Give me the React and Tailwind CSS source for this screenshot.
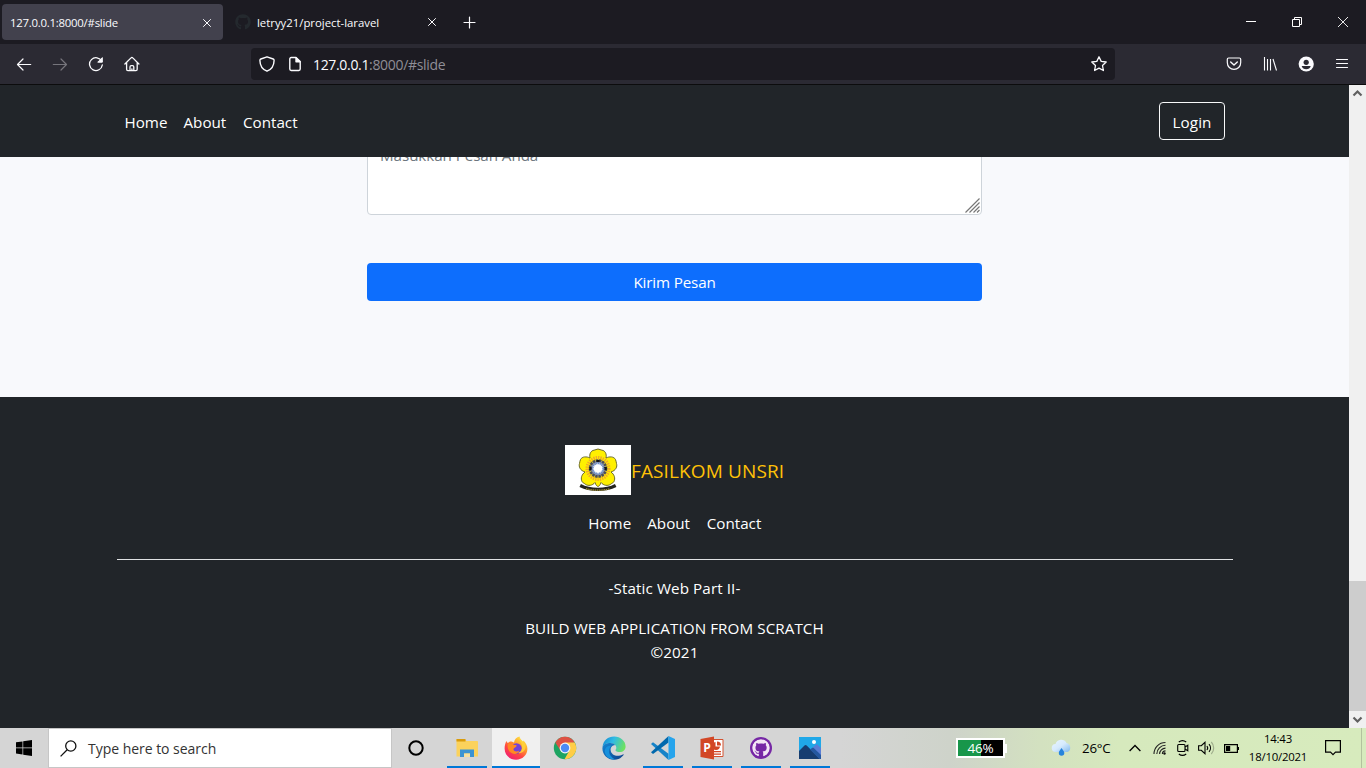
import React from 'react';
import { FaGithub } from 'react-icons/fa';

const line = { fill: 'none', stroke: 'currentColor', strokeLinecap: 'round', strokeLinejoin: 'round' };

function CloseIcon({ className }) {
  return (
    <svg className={className} width="10" height="10" viewBox="0 0 10 10" {...line} strokeWidth="1">
      <path d="M1.5 1.5l7 7M8.5 1.5l-7 7" />
    </svg>
  );
}

function TabBar() {
  return (
    <div className="flex h-11 items-center bg-[#1c1b22] text-[#fbfbfe]">
      <div className="ml-0.5 flex h-9 w-[221px] items-center rounded bg-[#42414d] pl-2 pr-[11px] pt-px">
        <span className="flex-1 whitespace-nowrap text-[11.4px] tracking-[-0.25px]">127.0.0.1:8000/#slide</span>
        <CloseIcon />
      </div>
      <div className="flex h-9 w-[225px] items-center pl-3 pr-[11px]">
        <FaGithub className="h-4 w-4 text-[#24292e]" />
        <span className="ml-1.5 flex-1 whitespace-nowrap pt-px text-[11.4px] tracking-[-0.02px]">letryy21/project-laravel</span>
        <CloseIcon />
      </div>
      <svg className="ml-[14px]" width="14" height="14" viewBox="0 0 14 14" {...line} strokeWidth="1.2">
        <path d="M7.5 2v11M2 7.500h11" />
      </svg>
      <div className="ml-auto flex items-center gap-9 pr-[18px]">
        <svg width="10" height="10" viewBox="0 0 10 10"><path d="M0 4h10v1H0z" fill="#fff" /></svg>
        <svg width="10" height="10" viewBox="0 0 10 10" fill="none" stroke="#fff">
          <path d="M.5 2.5h7v7h-7zM2.5 2.5v-2h7v7h-2" />
        </svg>
        <svg width="10" height="10" viewBox="0 0 10 10" fill="none" stroke="#fff" strokeWidth=".9"><path d="M0 0l10 10M10 0L0 10" /></svg>
      </div>
    </div>
  );
}

function Toolbar() {
  return (
    <div className="flex h-[41px] items-center border-b border-[#0c0c0d] bg-[#2b2a33] text-[#fbfbfe]">
      <div className="flex w-[251px] items-center gap-5 pl-4">
        <svg width="16" height="16" viewBox="0 0 16 16" {...line} strokeWidth="1.2"><path d="M14.7 8.5H1.5M7 3L1.5 8.5 7 14" /></svg>
        <svg className="text-[#76757c]" width="16" height="16" viewBox="0 0 16 16" {...line} strokeWidth="1.2"><path d="M1.3 8.5h13.2M9 3l5.5 5.5L9 14" /></svg>
        <svg width="16" height="16" viewBox="0 0 16 16" {...line} strokeWidth="1.3">
          <path d="M13.7 5.3A6.4 6.4 0 1 0 14.3 9" />
          <path d="M14.3 2v4.2h-4.2z" fill="currentColor" strokeWidth="1" />
        </svg>
        <svg width="16" height="16" viewBox="0 0 16 16" {...line} strokeWidth="1.3">
          <path d="M.9 8L7 1.9a1.2 1.2 0 0 1 1.8 0L14.9 8M2.6 6.7v6.6c0 .8.5 1.3 1.3 1.3h8c.8 0 1.3-.5 1.3-1.3V6.7M6 14.5v-3.600c0-.7.5-1.200 1.200-1.200h1.400c.7 0 1.200.5 1.200 1.200v3.600M7.900 13v1.400" />
        </svg>
      </div>
      <div className="flex h-8 w-[864px] items-center rounded bg-[#1c1b22] pl-2 pr-2">
        <svg width="16" height="16" viewBox="0 0 16 16" {...line} strokeWidth="1.4">
          <path d="M8 .8L1.8 3C1 3.3.9 3.7.9 4.4 1 9.5 3.6 13.4 8 15.2c4.4-1.8 7-5.7 7.1-10.800 0-.7-.2-1.100-.9-1.400z" />
        </svg>
        <svg className="ml-3" width="16" height="16" viewBox="0 0 16 16" {...line} strokeWidth="1.4">
          <path d="M9 1.5H4.200c-.8 0-1.400.6-1.400 1.400v10.200c0 .8.6 1.400 1.400 1.400h7.600c.8 0 1.400-.6 1.400-1.400V5.500z" />
          <path d="M9 1.7v4h4z" fill="currentColor" />
        </svg>
        <span className="ml-[10px] flex-1 whitespace-nowrap pt-px text-[14px] tracking-[-0.33px]">127.0.0.1<span className="text-[#8f8e96]">:8000/#slide</span></span>
        <svg width="16" height="16" viewBox="0 0 16 16" {...line} strokeWidth="1.3">
          <path d="M8 .8l2.200 4.600 5 .6-3.700 3.500.9 5L8 12.100l-4.400 2.400.9-5L.8 6l5-.6z" />
        </svg>
      </div>
      <div className="ml-auto flex items-center gap-5 pr-4">
        <svg width="16" height="16" viewBox="0 0 16 16" {...line} strokeWidth="1.2">
          <path d="M2.600 2h10.800c.8 0 1.300.5 1.300 1.300v3.200C14.700 10.800 11.600 13.300 8 13.300S1.300 10.800 1.300 6.500V3.300C1.300 2.500 1.800 2 2.600 2z" />
          <path d="M4.700 5.900L8 8.900l3.300-3" strokeWidth="1.4" />
        </svg>
        <svg width="16" height="16" viewBox="0 0 16 16" fill="none" stroke="currentColor" strokeWidth="1.1">
          <path d="M2.500 1v13.500M5.500 3v11.500M8.500 3v11.500M11 3l3.500 11.500" />
        </svg>
        <svg width="16" height="16" viewBox="0 0 16 16">
          <circle cx="8.2" cy="8" r="7.6" fill="#fbfbfe" />
          <circle cx="8.2" cy="6.3" r="2.6" fill="#2b2a33" />
          <path d="M3.700 10h9c-.5 2.200-2.300 3.300-4.500 3.300S4.200 12.200 3.700 10z" fill="#2b2a33" />
        </svg>
        <svg width="16" height="16" viewBox="0 0 16 16" {...line} strokeWidth="1.2"><path d="M2.500 3.500h11M2.500 7.500h11M2.500 11.500h11" /></svg>
      </div>
    </div>
  );
}

function UniversityLogo() {
  return (
    <svg width="66" height="50" viewBox="0 0 66 50">
      <rect width="66" height="50" fill="#fff" />
      <g fill="#fff000" stroke="#5c5c20" strokeWidth=".9" strokeLinejoin="round">
        <path d="M25 13c-1-4 1-7.500 4-7.800 1.500 0 2.500-1.200 4-1.200s2.500 1.200 4 1.200c3 .3 5 3.800 4 7.800 3.500-1.800 8-1.500 9.500 1.500.8 1.400.5 2.500 1 4 1 3-.5 7-5.500 8.500 3.500 2.500 4.500 6.500 3 9.500-.8 1.500-2 1.500-3.300 2.700-2.700 2-7.200 1.500-9.700-1.700-.8 3-2.500 4-3 4s-2.200-1-3-4c-2.500 3.200-7 3.700-9.700 1.700C19 38 17.800 38 17 36.500c-1.500-3-.5-7 3-9.500-5-1.500-6.500-5.500-5.500-8.500.5-1.500.2-2.600 1-4C17 11.500 21.500 11.200 25 13z" />
      </g>
      <circle cx="33" cy="23.500" r="10.800" fill="none" stroke="#f0a82c" strokeWidth="3.400" strokeDasharray="1.300 1" />
      <circle cx="33" cy="23.500" r="8" fill="#9a9aa0" stroke="#4c4e58" strokeWidth="2.600" strokeDasharray="2.500 .7" />
      <path d="M24.300 23.500h3M38.700 23.500h3M33 15v2" stroke="#151515" strokeWidth="3" />
      <circle cx="33" cy="23.500" r="5.400" fill="#fff" stroke="#6c8bc6" strokeWidth="2.200" strokeDasharray="1.400 .5" />
      <path d="M15.200 40.500c10 5.200 25.500 5.200 35.500 0" fill="none" stroke="#24231c" strokeWidth="3.200" />
      <path d="M21 43.700c8 2 16 2 24 0" fill="none" stroke="#a79535" strokeWidth="1.200" strokeDasharray="1.500 .7" />
    </svg>
  );
}

function NavLinks() {
  return (
    <nav className="flex gap-4 whitespace-nowrap text-[15.2px] leading-6">
      <a className="w-[43px]">Home</a>
      <a className="w-[43.5px]">About</a>
      <a className="w-[55px]">Contact</a>
    </nav>
  );
}

function WebPage() {
  return (
    <main className="flex w-[1349px] flex-col bg-[#f8f9fc]">
      <header className="z-10 flex h-[72px] shrink-0 items-center justify-between bg-[#212529] pl-[124.5px] pr-[124px] text-white">
        <div className="pt-px"><NavLinks /></div>
        <button className="flex h-[38px] w-[66px] items-center justify-center rounded border border-[#f8f9fa] pt-[2px] text-[15.2px] tracking-[0.1px]">Login</button>
      </header>
      <section className="flex h-60 shrink-0 flex-col px-[367px]">
        <div className="-mt-3.5 flex h-[72px] justify-between rounded border border-[#ced4da] bg-white pl-3">
          <span className="-mt-px text-[15.2px] leading-6 tracking-[-0.07px] text-[#6c757d]">Masukkan Pesan Anda</span>
          <svg className="mr-px mb-px self-end" width="15" height="15" viewBox="0 0 15 15" fill="none" stroke="#777" strokeWidth="1.2">
            <path d="M.5 14.5l14-14M4.500 14.500l10-10M8.500 14.500l6-6M12 14.500l2.500-2.500" />
          </svg>
        </div>
        <button className="mt-12 flex h-[38px] items-center justify-center rounded bg-[#0d6efd] text-[15.2px] tracking-[-0.15px] text-white">Kirim Pesan</button>
      </section>
      <footer className="flex flex-1 flex-col items-center bg-[#212529] pt-12 text-[15.2px] leading-6 text-white">
        <div className="flex h-[50px] items-center">
          <UniversityLogo />
          <span className="w-[153px] whitespace-nowrap pt-0.5 text-[19px] tracking-[0.12px] text-[#ffc107]">FASILKOM UNSRI</span>
        </div>
        <div className="mt-4 pl-px"><NavLinks /></div>
        <div className="mt-6 h-px w-[1116px] bg-[#dfe1e3]" />
        <p className="mt-4 tracking-[0.1px]">-Static Web Part II-</p>
        <p className="mt-4 whitespace-nowrap tracking-[0.08px]">BUILD WEB APPLICATION FROM SCRATCH</p>
        <p className="tracking-[0.1px]">©2021</p>
      </footer>
    </main>
  );
}

function Scrollbar() {
  return (
    <div className="flex w-[17px] flex-col items-center bg-[#f0f0f0]">
      <svg width="17" height="17" viewBox="0 0 17 17" fill="none" stroke="#606060" strokeWidth="2.2"><path d="M4.500 10.500l4-4 4 4" /></svg>
      <div className="mt-[479px] h-[130px] w-full bg-[#cdcdcd]" />
      <svg width="17" height="17" viewBox="0 0 17 17" fill="none" stroke="#606060" strokeWidth="2.2"><path d="M4.500 6.500l4 4 4-4" /></svg>
    </div>
  );
}

function ExplorerIcon() {
  return (
    <svg width="24" height="24" viewBox="0 0 24 24">
      <path d="M1.500 3h8l2 2H22c.6 0 1 .4 1 1v14.500H1.500z" fill="#fbd25c" />
      <path d="M1.500 3h9v2.500h-9z" fill="#d99b0b" />
      <path d="M5 21v-7.500h14V21h-4v-3.500H9V21z" fill="#3b93d3" />
      <path d="M9 17.500h6V21H9z" fill="#f6dfa0" />
    </svg>
  );
}

function FirefoxIcon() {
  return (
    <svg width="24" height="24" viewBox="0 0 24 24">
      <defs>
        <linearGradient id="ffBody" x1=".85" y1="0" x2=".2" y2="1">
          <stop offset="0" stopColor="#fff24a" /><stop offset=".35" stopColor="#ffa22b" />
          <stop offset=".65" stopColor="#ff4742" /><stop offset="1" stopColor="#ef1b79" />
        </linearGradient>
      </defs>
      <path d="M2.5 5c.4 1 .8 1.500 1.300 2L6 5.500C7 5.200 9 6 10 6.500c.5-3 2.500-5.500 5.500-6-.3 2.500 2 3.500 3.500 5.500l.5-1.500C22 7 23.500 10 23.400 13c-.1 6-5 10.700-11.300 10.700C5.500 23.700.6 19 .6 12.600.6 9.500 1.300 7 2.500 5z" fill="url(#ffBody)" />
      <circle cx="12.5" cy="12.5" r="5.2" fill="#7442d6" />
      <path d="M4 8c2-1 4 0 5.500.7 1.500.2 3 .2 3.200 1-.3 1.500-3 1.800-3.300 3.500.5 2.500 4 2.800 6 1.300-1.200 3.500-5.500 4.500-8.700 2C4 14.500 3 11 4 8z" fill="#ff8a22" />
      <path d="M15.500.5C14 4 17.500 6 18 10c.4 4-1.500 6-4 7 4 .8 8-2.200 7.500-7.500C21 6 16 4 15.500.5z" fill="#ffd43a" opacity=".85" />
    </svg>
  );
}

function ChromeIcon() {
  return (
    <svg width="24" height="24" viewBox="0 0 24 24">
      <circle cx="12" cy="12" r="11.2" fill="#1da462" />
      <path d="M2.300 6.400A11.200 11.200 0 0 1 21.700 6.400L12 8z" fill="#dd5144" />
      <path d="M2.300 6.400L7.500 14.500 12 7z" fill="#dd5144" />
      <path d="M21.700 6.400A11.200 11.200 0 0 1 11.500 23.200L17 13.500 12 6.400z" fill="#ffcd46" />
      <circle cx="12" cy="12" r="5.400" fill="#f5f5f5" />
      <circle cx="12" cy="12" r="4.200" fill="#4c8bf5" />
    </svg>
  );
}

function EdgeIcon() {
  return (
    <svg width="24" height="24" viewBox="0 0 24 24">
      <defs>
        <linearGradient id="edgeTop" x1="0" y1=".2" x2="1" y2=".5">
          <stop offset="0" stopColor="#168bd2" /><stop offset=".45" stopColor="#30bbe5" /><stop offset="1" stopColor="#6de25f" />
        </linearGradient>
        <linearGradient id="edgeBody" x1="0" y1="0" x2="1" y2="1">
          <stop offset="0" stopColor="#1687d4" /><stop offset="1" stopColor="#0c3f89" />
        </linearGradient>
      </defs>
      <path d="M.5 11C1.200 4.500 6 .5 12.200.5 18.500.500 23.600 5 23.600 10.500c0 3.500-2.500 5.500-5.800 5.500-2.500 0-4.300-.8-4.300-1.800 0-.6.8-1 .8-2.500C14.300 9.500 12 7 8.500 7S2 8.500.5 11z" fill="url(#edgeTop)" />
      <path d="M.4 12.500C.5 8.500 4.500 7 8.500 7c2 0 3.700.9 4.700 2-3 .3-5 2.500-4.500 5.500.5 4 5 6.300 9.500 5 1.500-.4 3-1.500 3.500-1.300.7.200-3.200 5.600-9.400 5.600C5.500 23.800.4 18.500.4 12.500z" fill="url(#edgeBody)" />
      <path d="M9.500 9.600C7 12 6 16 8.500 19.500c1.300 1.900 3 3.200 5 4-7 1-12-5-10.500-10 .8-2.500 3.500-4 6.500-3.900z" fill="#1690dc" />
    </svg>
  );
}

function CodeIcon() {
  return (
    <svg width="24" height="24" viewBox="0 0 24 24">
      <path d="M0 8l2-1.700 15.500 11.500V24z" fill="#1683c8" />
      <path d="M0 16.200l2 1.700L17.500 6.500V0z" fill="#0068ad" />
      <path d="M17.500 0L24 3v18l-6.500 3z" fill="#26a4ec" />
    </svg>
  );
}

function PowerPointIcon() {
  return (
    <svg width="24" height="24" viewBox="0 0 24 24">
      <path d="M13 3.500h10v17H13z" fill="#fff" stroke="#d35230" />
      <path d="M15.500 6v4.500H20A4 4 0 1 1 15.500 6z" fill="#d24726" />
      <path d="M17 5.500a4 4 0 0 1 4 4h-4z" fill="#d24726" />
      <path d="M14 15h7v1.300h-7zM14 17.500h7v1.200h-7z" fill="#d24726" />
      <path d="M.5 3L14 .6v23L.5 21z" fill="#d24726" />
      <text x="3.3" y="16.3" fontFamily="Open Sans" fontSize="12" fontWeight="700" fill="#fff">P</text>
    </svg>
  );
}

function PhotosIcon() {
  return (
    <svg width="24" height="24" viewBox="0 0 24 24">
      <path d="M1 1h22v22H1z" fill="#20a8e8" />
      <path d="M10 16l8.500-8L23 12v11H10z" fill="#5b7ed5" />
      <path d="M1 15l5.500-5.500c.7-.7 1.500-.7 2.200 0L22 23H1z" fill="#173d70" />
      <path d="M12 13.500l2-1.500c.6-.4 1.100-.4 1.700.1L23 19v4h-1.500z" fill="#2558a0" />
      <circle cx="16" cy="6" r="2" fill="#fff" />
    </svg>
  );
}

function TaskbarApp({ open, active, children }) {
  return (
    <div className={active ? 'flex h-10 w-12 flex-col items-center bg-[#f0f0f0]' : 'flex h-10 w-12 flex-col items-center'}>
      <div className="flex h-[38px] items-center pt-0.5">{children}</div>
      {open && <div className={active ? 'h-0.5 w-12 bg-[#0078d7]' : 'h-0.5 w-10 bg-[#0078d7]'} />}
    </div>
  );
}

function Taskbar() {
  return (
    <div className="flex h-10 items-center bg-[linear-gradient(90deg,#d5d5d5_0,#d5d5d5_840px,#ced3ca_950px,#d3e1c0_1040px,#d6e9bd_1120px,#d7ebbd_1366px)] text-black">
      <div className="flex w-12 justify-center">
        <svg width="16" height="16" viewBox="0 0 16 16"><path d="M0 2.300l6.500-.9v6.200H0zM7.200 1.300L16 0v7.600H7.200zM0 8.300h6.500v6.200L0 13.600zM7.200 8.300H16V16l-8.800-1.300z" /></svg>
      </div>
      <div className="flex h-10 w-[344px] items-center border border-[#c6c6c6] bg-white pl-[11px]">
        <svg width="17" height="17" viewBox="0 0 17 17" fill="none" stroke="#111" strokeWidth="1.3"><circle cx="10.800" cy="6" r="5.100" /><path d="M7.200 9.800L.6 16.400" /></svg>
        <span className="ml-[11px] whitespace-nowrap pt-px text-[14px] tracking-[-0.03px] text-[#333]">Type here to search</span>
      </div>
      <div className="mr-[3px] flex w-12 justify-center">
        <svg width="16" height="16" viewBox="0 0 16 16"><circle cx="8" cy="8" r="6.7" fill="none" stroke="#000" strokeWidth="2" /></svg>
      </div>
      <div className="flex gap-px">
        <TaskbarApp open><ExplorerIcon /></TaskbarApp>
        <TaskbarApp open active><FirefoxIcon /></TaskbarApp>
        <TaskbarApp><ChromeIcon /></TaskbarApp>
        <TaskbarApp><EdgeIcon /></TaskbarApp>
        <TaskbarApp open><CodeIcon /></TaskbarApp>
        <TaskbarApp open><PowerPointIcon /></TaskbarApp>
        <TaskbarApp open>
          <div className="flex h-[22px] w-[22px] items-center justify-center rounded-full bg-[#7627a5]">
            <FaGithub className="h-[18px] w-[18px] rounded-full bg-[#7627a5] text-[#f2e5f5]" />
          </div>
        </TaskbarApp>
        <TaskbarApp open><PhotosIcon /></TaskbarApp>
      </div>
      <div className="ml-[122px] flex items-center">
        <div className="flex h-5 w-[49px] items-center justify-center border-[2px] border-white bg-[linear-gradient(90deg,#18964a_0,#18964a_23px,#000_23px)]">
          <span className="text-[13.5px] leading-4 text-white tracking-[-0.2px]">46%</span>
        </div>
        <div className="h-[9px] w-0.5 bg-white" />
      </div>
      <svg className="ml-11" width="22" height="18" viewBox="0 0 22 18">
        <defs>
          <linearGradient id="cloud" x1="0" y1="0" x2="1" y2="1"><stop offset="0" stopColor="#e9f5ff" /><stop offset=".5" stopColor="#d6eafd" /><stop offset="1" stopColor="#82b9ec" /></linearGradient>
        </defs>
        <path d="M5 13a4 4 0 0 1-.5-8A6 6 0 0 1 15.500 4a4.800 4.800 0 0 1 1 9z" fill="url(#cloud)" />
        <path d="M10.500 9c2 2.500 2.800 3.500 2.800 5a2.700 2.700 0 0 1-5.500 0c0-1.500.8-2.500 2.700-5z" fill="#2684dc" />
      </svg>
      <span className="ml-[9px] w-[30px] whitespace-nowrap pt-0.5 text-[13.3px] tracking-[-0.2px]">26°C</span>
      <svg className="ml-[17px]" width="12" height="8" viewBox="0 0 12 8" fill="none" stroke="#000" strokeWidth="1.3"><path d="M.6 7L6 1.500 11.400 7" /></svg>
      <svg className="ml-[12px]" width="13" height="14" viewBox="0 0 13 14" fill="none" stroke="#222" strokeWidth="1.1">
        <path d="M1 13C1 6.500 6 1.500 12.500 1.500M3.800 13c0-5 4-8.700 8.700-8.700M6.600 13c0-3.400 2.700-5.900 5.900-5.900M9.400 13c0-1.700 1.400-3.100 3.100-3.100" />
        <circle cx="11.500" cy="12.500" r="1.2" fill="#111" stroke="none" />
      </svg>
      <svg className="ml-[11px]" width="12" height="16" viewBox="0 0 12 16" fill="none" stroke="#000" strokeWidth="1.1">
        <rect x=".7" y="4.500" width="7.300" height="7" rx="1" /><path d="M8 7l2.800-1.700v5.400L8 9M1.800 2C4 .3 7 .3 9.200 2M1.800 14c2.200 1.700 5.200 1.700 7.400 0" />
      </svg>
      <svg className="ml-[9px]" width="17" height="14" viewBox="0 0 17 14" fill="none" stroke="#000" strokeWidth="1.1">
        <path d="M.6 4.700h2.700L7 1.300v11.400L3.300 9.300H.6zM8.900 5c1 1.200 1 2.800 0 4M11 3.200c2 2.200 2 5.400 0 7.600" /><path d="M13.300 1c3.200 3.400 3.200 8.600 0 12" stroke="#9eac8b" />
      </svg>
      <svg className="ml-[9px]" width="15" height="9" viewBox="0 0 15 9"><path d="M.6.6h12.800v7.800H.6z" fill="none" stroke="#000" strokeWidth="1.2" /><path d="M2 2h4.200v5H2zM14 3h1v3h-1z" /></svg>
      <div className="ml-[9px] -mt-px flex w-[60px] flex-col items-center whitespace-nowrap text-[11.4px] leading-[18px] tracking-[-0.22px]">
        <span>14:43</span>
        <span>18/10/2021</span>
      </div>
      <svg className="ml-[17px]" width="16" height="16" viewBox="0 0 16 16" fill="none" stroke="#000" strokeWidth="1.2"><path d="M.6.600h14.800v11.600H10.500L8 14.700l-2.500-2.500H.6z" /></svg>
      <div className="ml-auto mr-1 h-10 w-px bg-[#b3c29e]" />
    </div>
  );
}

export default function App() {
  return (
    <div className="flex h-[768px] w-[1366px] flex-col overflow-hidden font-['Open_Sans','Noto_Sans',sans-serif]">
      <TabBar />
      <Toolbar />
      <div className="flex h-[643px]">
        <WebPage />
        <Scrollbar />
      </div>
      <Taskbar />
    </div>
  );
}
